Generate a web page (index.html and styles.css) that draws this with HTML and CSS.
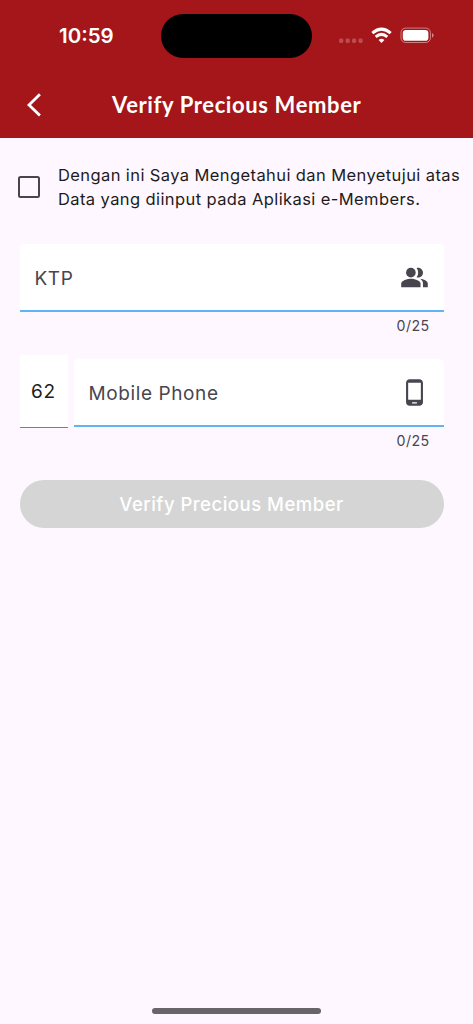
FILE: index.html
```html
<!DOCTYPE html>
<html lang="id">
<head>
<meta charset="utf-8">
<meta name="viewport" content="width=device-width, initial-scale=1">
<title>Verify Precious Member</title>
<link rel="stylesheet" href="styles.css">
</head>
<body>
<div class="screen">
  <header class="header">
    <div class="status">
      <span class="clock">10:59</span>
      <span class="island"></span>
      <svg class="status-icons" width="96" height="18" viewBox="0 0 96 18">
        <g fill="#fff" fill-opacity=".24">
          <rect x="1.1" y="11.5" width="4.2" height="4.5" rx="1.4"/>
          <rect x="7.6" y="11.5" width="4.2" height="4.5" rx="1.4"/>
          <rect x="14" y="11.5" width="4.2" height="4.5" rx="1.4"/>
          <rect x="20.5" y="11.5" width="4.2" height="4.5" rx="1.4"/>
        </g>
        <g fill="none" stroke="#fff" stroke-width="3">
          <path d="M34.3 6.1Q43.5-1.8 52.7 6.1"/>
          <path d="M37.7 9.8Q43.5 5 49.3 9.8"/>
        </g>
        <path d="M40.6 12.9Q43.5 10.6 46.4 12.9L43.5 16Z" fill="#fff"/>
        <rect x="63" y="1.1" width="29.4" height="14.4" rx="4.6" fill="none" stroke="#fff" stroke-opacity=".45"/>
        <rect x="64.8" y="2.9" width="25.6" height="10.9" rx="3.1" fill="#fff"/>
        <path d="M94 6Q95.6 6.7 95.6 8.3T94 10.7Z" fill="#fff" fill-opacity=".5"/>
      </svg>
    </div>
    <div class="appbar">
      <svg class="back" width="16" height="24" viewBox="0 0 16 24"><path d="M14.9 1.2 4 11.9 14.9 22.6" fill="none" stroke="#fff" stroke-width="2.8"/></svg>
      <h1 class="title">Verify Precious Member</h1>
    </div>
  </header>
  <main class="form">
    <label class="consent">
      <span class="checkbox"></span>
      <span class="consent-text">Dengan ini Saya Mengetahui dan Menyetujui atas<br>Data yang diinput pada Aplikasi e-Members.</span>
    </label>
    <div class="field">
      <span class="label">KTP</span>
      <svg class="icon" width="29" height="29" viewBox="0 0 24 24" fill="#49454f"><path d="M16.67 13.13C18.04 14.06 19 15.32 19 17v3h4v-3c0-2.18-3.57-3.47-6.33-3.87zM15 12c2.21 0 4-1.79 4-4s-1.79-4-4-4c-.47 0-.91.1-1.33.24C14.5 5.27 15 6.58 15 8s-.5 2.73-1.33 3.76c.42.14.86.24 1.33.24z"/><circle cx="9" cy="8" r="4"/><path d="M9 13c-2.67 0-8 1.34-8 4v3h16v-3c0-2.66-5.33-4-8-4z"/></svg>
    </div>
    <div class="counter">0/25</div>
    <div class="phone-row">
      <div class="prefix">62</div>
      <div class="field phone">
        <span class="label">Mobile Phone</span>
        <svg class="icon" width="29" height="29" viewBox="0 0 24 24" fill="#49454f"><path d="M16 1H8C6.34 1 5 2.34 5 4v16c0 1.66 1.34 3 3 3h8c1.66 0 3-1.34 3-3V4c0-1.66-1.34-3-3-3zm-2 20h-4v-1h4v1zm3.25-3H6.75V4h10.5z"/></svg>
      </div>
    </div>
    <div class="counter">0/25</div>
    <button class="submit" disabled>Verify Precious Member</button>
  </main>
  <div class="home-indicator"></div>
</div>
</body>
</html>
```
FILE: styles.css
```css
* { box-sizing: border-box; }
body { margin: 0; background: #fef7ff; font-family: Inter, "Liberation Sans", sans-serif; }
.screen { width: 473px; height: 1024px; display: flex; flex-direction: column; overflow: hidden; background: #fef7ff; }
.header { height: 138.4px; flex: none; background: #a41619; color: #fff; }
.status { height: 72px; display: flex; align-items: center; padding-left: 59px; }
.clock { width: 102px; font-size: 20.5px; font-weight: 600; line-height: 24px; }
.island { width: 151px; height: 44px; border-radius: 22px; background: #000; }
.status-icons { margin-left: 26px; }
.appbar { height: 66px; display: flex; align-items: center; padding-left: 25px; }
.back { flex: none; margin-left: -.5px; }
.title { margin: 0 0 0 71.5px; font: 700 22px/28px Lato, sans-serif; letter-spacing: .62px; white-space: nowrap; }
.form { flex: 1; padding: 24.6px 0 0 19.5px; }
.consent { display: flex; align-items: center; height: 48px; margin-left: -1.5px; }
.checkbox { width: 22px; height: 22px; border: 2px solid #49454f; border-radius: 2.5px; flex: none; }
.consent-text { margin-left: 18px; font-size: 16.5px; line-height: 24px; letter-spacing: .4px; color: #1d1b20; white-space: nowrap; }
.field { width: 424px; height: 68px; margin-top: 33px; display: flex; align-items: center; justify-content: space-between; padding: 1px 14.5px 0 15px; background: #fff; border-bottom: 2px solid #62b3f3; border-radius: 5px 5px 0 0; }
.label { padding-top: 3px; font-size: 19px; line-height: 28px; letter-spacing: .6px; color: #49454f; white-space: nowrap; }
.icon { flex: none; }
.counter { width: 410px; height: 28px; text-align: right; font-size: 14.2px; line-height: 28px; letter-spacing: .4px; color: #49454f; }
.phone-row { display: flex; align-items: flex-end; gap: 6px; height: 73px; margin-top: 14px; }
.prefix { width: 48px; height: 73px; margin-bottom: -1px; padding-top: 1px; background: #fff; border-bottom: 1px solid #2196f3; font-size: 19px; line-height: 71px; letter-spacing: .7px; text-align: center; color: #1d1b20; }
.phone { width: 370px; margin: 0; }
.submit { display: block; width: 424px; height: 48px; margin-top: 24.6px; padding: 0; border: 0; border-radius: 24px; background: #d5d5d5; color: #fff; font: 500 18.5px/48px Inter, "Liberation Sans", sans-serif; letter-spacing: .5px; }
.home-indicator { flex: none; width: 169px; height: 6px; margin: 0 0 10px 152px; border-radius: 3px; background: #68646a; }
```
